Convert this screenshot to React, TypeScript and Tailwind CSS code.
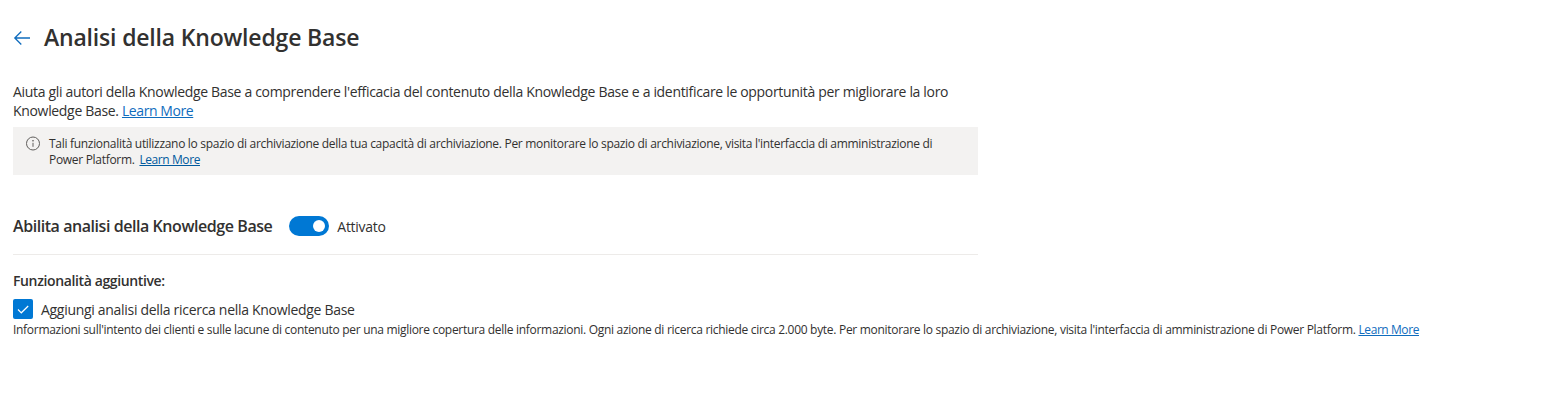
const font = { fontFamily: '"Open Sans", "Noto Sans", sans-serif' };

export default function App() {
  return (
    <div className="min-h-[404px] bg-white text-[#323130]" style={font}>
      <div className="w-[1554px] pl-[13px] pt-[21px]">
        {/* Header */}
        <div className="flex h-[32px] items-center">
          <svg className="mt-[2px] h-[16px] w-[18px] shrink-0 text-[#0f6cbd]" viewBox="0 0 18 16" fill="none" stroke="currentColor" strokeWidth="1.3">
            <path d="M17 8H1.8M8.3 1.5 1.8 8l6.5 6.5" />
          </svg>
          <h1 className="ml-[13px] text-[23px] font-semibold leading-[32px] tracking-[-0.18px]">Analisi della Knowledge Base</h1>
        </div>

        <div className="mt-[29px] w-[965px]">
          <p className="text-[14px] leading-[19px] tracking-[-0.325px]">
            Aiuta gli autori della Knowledge Base a comprendere l'efficacia del contenuto della Knowledge Base e a identificare le opportunità per migliorare la loro Knowledge Base.{" "}
            <a className="text-[#0f6cbd] underline tracking-[-0.42px]">Learn More</a>
          </p>

          {/* Info banner */}
          <div className="mt-[7px] flex h-[48px] bg-[#f3f2f1] pl-[12px] pr-[30px] pt-[9px] text-[12px] leading-[16px] tracking-[-0.3px]">
            <svg className="h-[16px] w-[16px] shrink-0 text-[#605e5c]" viewBox="0 0 16 16" fill="none" stroke="currentColor" strokeWidth="1">
              <circle cx="8" cy="7.5" r="6.5" />
              <path d="M8 6.8v4" />
              <circle cx="8" cy="4.8" r="0.4" fill="currentColor" />
            </svg>
            <p className="ml-[8px]">
              Tali funzionalità utilizzano lo spazio di archiviazione della tua capacità di archiviazione. Per monitorare lo spazio di archiviazione, visita l'interfaccia di amministrazione di Power Platform.{" "}
              <a className="ml-[2px] text-[#005a9e] underline tracking-[-0.42px]">Learn More</a>
            </p>
          </div>

          {/* Toggle */}
          <div className="mt-[41px] flex h-[20px] items-center">
            <span className="text-[16px] font-semibold tracking-[-0.44px]">Abilita analisi della Knowledge Base</span>
            <div className="ml-[17px] flex h-[20px] w-[40px] items-center justify-end rounded-full bg-[#0078d4] pr-[4px]">
              <div className="h-[12px] w-[12px] rounded-full bg-white" />
            </div>
            <span className="ml-[8px] text-[14px] tracking-[-0.3px]">Attivato</span>
          </div>

          <div className="mt-[18px] h-px bg-[#edebe9]" />
        </div>

        <div className="mt-[17px] text-[14px] font-semibold leading-[18px] tracking-[-0.37px]">Funzionalità aggiuntive:</div>

        <div className="mt-[9px] flex h-[20px] items-center">
          <div className="flex h-[20px] w-[20px] items-center justify-center rounded-[2px] bg-[#0078d4]">
            <svg className="h-[14px] w-[14px] text-white" viewBox="0 0 14 14" fill="none" stroke="currentColor" strokeWidth="1.2">
              <path d="M2 7.5 5.3 10.8 12.2 4" />
            </svg>
          </div>
          <span className="ml-[8px] text-[14px] tracking-[-0.3px]">Aggiungi analisi della ricerca nella Knowledge Base</span>
        </div>

        <p className="mt-[3px] text-[12px] leading-[16px] tracking-[-0.296px]">
          Informazioni sull'intento dei clienti e sulle lacune di contenuto per una migliore copertura delle informazioni. Ogni azione di ricerca richiede circa 2.000 byte. Per monitorare lo spazio di archiviazione, visita l'interfaccia di amministrazione di Power Platform.{" "}
          <a className="text-[#0f6cbd] underline tracking-[-0.42px]">Learn More</a>
        </p>
      </div>
    </div>
  );
}
